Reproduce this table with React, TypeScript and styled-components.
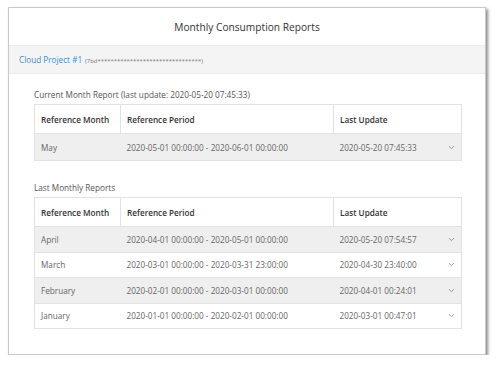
import React from 'react';
import styled, { createGlobalStyle } from 'styled-components';

const GlobalStyle = createGlobalStyle`
  body {
    margin: 0;
    background: #ffffff;
    font-family: "Open Sans", "Noto Sans", Arial, sans-serif;
  }
`;

interface IReport {
  month: string;
  period: string;
  lastUpdate: string;
}

const current: IReport[] = [
  { month: 'May', period: '2020-05-01 00:00:00 - 2020-06-01 00:00:00', lastUpdate: '2020-05-20 07:45:33' },
];

const past: IReport[] = [
  { month: 'April', period: '2020-04-01 00:00:00 - 2020-05-01 00:00:00', lastUpdate: '2020-05-20 07:54:57' },
  { month: 'March', period: '2020-03-01 00:00:00 - 2020-03-31 23:00:00', lastUpdate: '2020-04-30 23:40:00' },
  { month: 'February', period: '2020-02-01 00:00:00 - 2020-03-01 00:00:00', lastUpdate: '2020-04-01 00:24:01' },
  { month: 'January', period: '2020-01-01 00:00:00 - 2020-02-01 00:00:00', lastUpdate: '2020-03-01 00:47:01' },
];

const Panel = styled.div`
  margin: 7px 0 0 8px;
  width: 476px;
  height: 346px;
  border: 1px solid #c9c9c9;
  background: #fff;
  box-shadow: 2px 2px 3px rgba(0, 0, 0, 0.45);
  display: flex;
  flex-direction: column;
`;

const Title = styled.div`
  height: 37px;
  display: flex;
  align-items: center;
  justify-content: center;
  font-size: 10.2px;
  color: #333;
  border-bottom: 1px solid #ececec;
`;

const ProjectBar = styled.div`
  height: 27px;
  background: #f4f4f4;
  display: flex;
  align-items: center;
  padding-left: 10px;
  border-bottom: 1px solid #ececec;
`;

const ProjectName = styled.span`
  color: #4b89c0;
  font-size: 8.2px;
`;

const ProjectKey = styled.span`
  color: #777;
  font-size: 5.9px;
  margin-left: 3px;
  margin-top: 2px;
`;

const Content = styled.div`
  padding: 13px 24px 0 25px;
`;

const SectionLabel = styled.div<{ $top: number }>`
  font-size: 8.2px;
  color: #555;
  margin-top: ${({ $top }) => `${$top}px`};
  height: 16px;
  line-height: 16px;
`;

const Table = styled.table`
  width: 427px;
  border-collapse: collapse;
  table-layout: fixed;
  margin-top: 1px;
  font-size: 8.2px;
`;

const HeadCell = styled.th<{ $width: number }>`
  box-sizing: border-box;
  width: ${({ $width }) => `${$width}px`};
  height: 29px;
  padding: 0 6px;
  text-align: left;
  font-weight: 600;
  color: #333;
  border: 1px solid #e2e2e2;
  background: #fff;
`;

const Row = styled.tr<{ $shaded: boolean; $height: number }>`
  height: ${({ $height }) => `${$height}px`};
  background: ${({ $shaded }) => ($shaded ? '#efefef' : '#fff')};
`;

const Cell = styled.td`
  box-sizing: border-box;
  padding: 0 6px;
  color: #666;
  border-top: 1px solid #e2e2e2;
  border-bottom: 1px solid #e2e2e2;
  &:first-child {
    border-left: 1px solid #e2e2e2;
  }
  &:last-child {
    border-right: 1px solid #e2e2e2;
  }
`;

const UpdateCell = styled.div`
  display: flex;
  align-items: center;
  justify-content: space-between;
`;

const Chevron = () => (
  <svg width="7" height="5" viewBox="0 0 7 5">
    <polyline points="1,1.2 3.5,3.6 6,1.2" fill="none" stroke="#999" strokeWidth="1" />
  </svg>
);

const ReportTable = ({ rows, rowHeight }: { rows: IReport[]; rowHeight: number }) => (
  <Table>
    <thead>
      <tr>
        <HeadCell $width={86}>Reference Month</HeadCell>
        <HeadCell $width={213}>Reference Period</HeadCell>
        <HeadCell $width={128}>Last Update</HeadCell>
      </tr>
    </thead>
    <tbody>
      {rows.map((r, i) => (
        <Row key={r.month} $shaded={i % 2 === 0} $height={rowHeight}>
          <Cell>{r.month}</Cell>
          <Cell>{r.period}</Cell>
          <Cell>
            <UpdateCell>
              <span>{r.lastUpdate}</span>
              <Chevron />
            </UpdateCell>
          </Cell>
        </Row>
      ))}
    </tbody>
  </Table>
);

const App = () => {
  return (
    <>
      <GlobalStyle />
      <Panel>
        <Title>Monthly Consumption Reports</Title>
        <ProjectBar>
          <ProjectName>Cloud Project #1</ProjectName>
          <ProjectKey>(7bd********************************)</ProjectKey>
        </ProjectBar>
        <Content>
          <SectionLabel $top={0}>Current Month Report (last update: 2020-05-20 07:45:33)</SectionLabel>
          <ReportTable rows={current} rowHeight={27} />
          <SectionLabel $top={19}>Last Monthly Reports</SectionLabel>
          <ReportTable rows={past} rowHeight={25.5} />
        </Content>
      </Panel>
    </>
  );
};

export default App;
